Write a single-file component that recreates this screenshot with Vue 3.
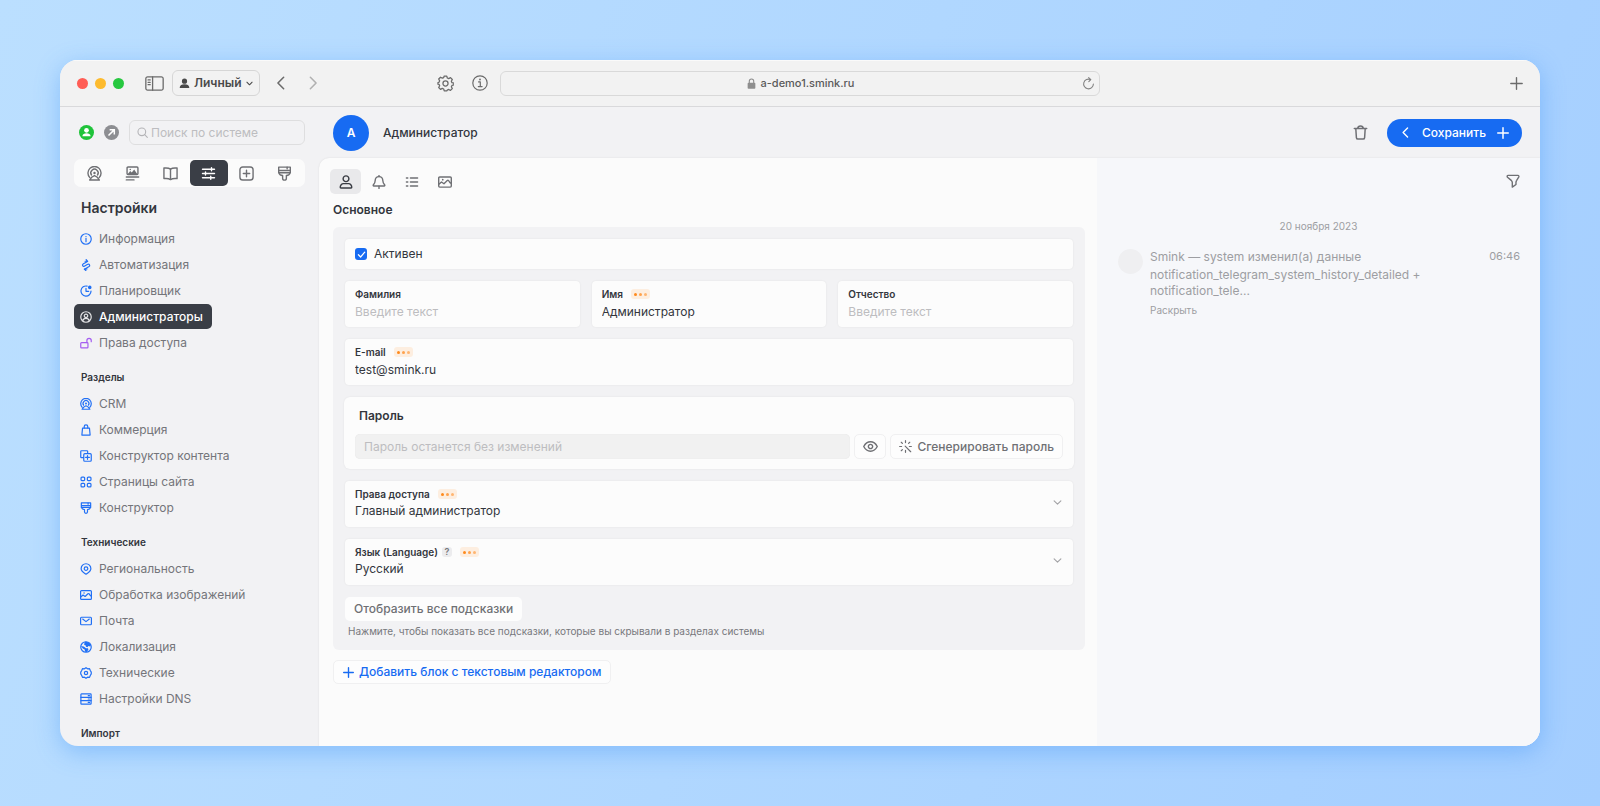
<script setup>
import { h, ref } from 'vue'

const dot = (cx, cy, r) =>
  `M${cx - r} ${cy}a${r} ${r} 0 1 0 ${2 * r} 0a${r} ${r} 0 1 0 ${-2 * r} 0z`

const glyphs = {
  info: { s: [dot(8, 8, 7), 'M8 7.2v4.4'], f: [dot(8, 4.8, 0.9)] },
  infoSerif: { s: [dot(8, 8, 7.2), 'M6.6 6.9h1.7v4.6M6.3 11.6h3.8'], f: [dot(8, 4.5, 0.9)] },
  bolt: { s: ['M10 3.200L4 6.800a1.700 1.700 0 0 0 1.700 2.900l4.600-2.600a1.700 1.700 0 0 1 1.800 2.900L6 13.600', 'M6.800 3l3.400.1L8.200 .8M9.200 13.200l-3.400.3 2 1.900'], f: [] },
  plan: { s: ['M14.700 8A6.700 6.700 0 1 1 9.500 1.500', 'M8 4.400V8.400h3.600'], f: [dot(13, 3.2, 2.4)] },
  admin: { s: [dot(8, 8, 7), dot(8, 6.4, 2.3), 'M3.600 13c.5-2.200 2.200-3.200 4.400-3.200s3.900 1 4.400 3.200'], f: [] },
  unlock: { s: ['M2 7.600h7.600a1 1 0 0 1 1 1v5a1 1 0 0 1-1 1H2a1 1 0 0 1-1-1v-5a1 1 0 0 1 1-1z', 'M9.200 7.400V4.600a2.900 2.900 0 0 1 5.800 0v1.600'], f: [] },
  crm: { s: ['M3 12.400A7 7 0 1 1 13 12.400', 'M4.800 9.600A3.900 3.900 0 1 1 11.200 9.600', 'M2.800 15c1-1.900 2.600-3.700 5.200-4.700 2.600 1 4.200 2.800 5.200 4.700z'], f: [dot(8, 7.4, 1.3)] },
  bag: { s: ['M3.400 5.400h9.200l.9 9.300h-11z', 'M5.600 5.200V3.600a2.400 2.400 0 0 1 4.800 0v1.600'], f: [] },
  copy: { s: ['M4.800 10.200H2a1 1 0 0 1-1-1V2a1 1 0 0 1 1-1h7.200a1 1 0 0 1 1 1v2.600', 'M6.400 4.900h7.200a1.400 1.400 0 0 1 1.400 1.400v7.300a1.400 1.400 0 0 1-1.400 1.400H6.400A1.400 1.400 0 0 1 5 13.600V6.300a1.400 1.400 0 0 1 1.400-1.400z', 'M10 7.400v5M7.500 9.900h5'], f: [] },
  grid: { s: ['M2.600 1.400h2.400a1.200 1.200 0 0 1 1.200 1.200v2.400a1.200 1.200 0 0 1-1.200 1.200H2.600a1.200 1.200 0 0 1-1.200-1.200V2.600a1.200 1.200 0 0 1 1.200-1.200z', 'M11 1.400h2.400a1.200 1.200 0 0 1 1.200 1.200v2.400a1.200 1.200 0 0 1-1.200 1.200H11a1.200 1.200 0 0 1-1.200-1.200V2.600A1.200 1.200 0 0 1 11 1.400z', 'M2.600 9.800h2.400a1.200 1.200 0 0 1 1.200 1.200v2.400a1.200 1.200 0 0 1-1.200 1.200H2.600a1.200 1.200 0 0 1-1.200-1.200V11a1.200 1.200 0 0 1 1.200-1.200z', 'M11 9.800h2.400a1.200 1.200 0 0 1 1.200 1.200v2.400a1.200 1.200 0 0 1-1.200 1.200H11a1.200 1.200 0 0 1-1.200-1.200V11A1.200 1.200 0 0 1 11 9.800z'], f: [] },
  brush: { s: ['M1.800 1.200h12.400v6H1.800z', 'M2 4.800h12M10.800 1.400v1.600', 'M2.200 7.400c.2 1.700 1.200 2.600 3.800 2.800v2.900a2 2 0 0 0 4 0v-2.900c2.600-.2 3.600-1.100 3.800-2.800'], f: [] },
  pin: { s: ['M8 1a6.500 6.500 0 0 1 6.500 6.500c0 3.300-3 5-6.500 7.500-3.500-2.500-6.500-4.200-6.500-7.500A6.500 6.500 0 0 1 8 1z', dot(8, 7.500, 2.400)], f: [] },
  image: { s: ['M2 2.200h12a1.200 1.200 0 0 1 1.200 1.200v9.200a1.200 1.200 0 0 1-1.200 1.200H2a1.200 1.200 0 0 1-1.200-1.200V3.400A1.200 1.200 0 0 1 2 2.200z', 'M1 10.600l3-2.600 2.800 2L10.600 6.400c1-.9 1.900.2 2.400 1.400.4 1 1.200 1.400 2 1.600'], f: [dot(5.4, 5.4, 1)] },
  mail: { s: ['M2 3h12a1.200 1.200 0 0 1 1.200 1.200v7.600a1.200 1.200 0 0 1-1.200 1.200H2a1.200 1.200 0 0 1-1.200-1.200V4.200A1.200 1.200 0 0 1 2 3z', 'M3.600 5.400L8 8.800l4.400-3.400'], f: [] },
  globe: { s: [dot(8, 8, 7)], f: ['M6 1.400c3-.9 6.500.4 8.400 4.200l-.8 1.600-2.600-.4-1 1.500-2-.6-.6-2-1.800-.5z', 'M1.200 6.800l3.800.6 3 2.200 2.600.2.600 1.600-2 3.200-2.400-.3-.6-3-2.400-1.200z'] },
  hexgear: { s: ['M8 .9l2.100 1.500 2.600-.2 1 2.500 1.300 2.100v2.400l-1.300 2.100-1 2.500-2.600-.2L8 15.100l-2.100-1.500-2.600.2-1-2.500L1 9.200V6.800l1.300-2.100 1-2.500 2.600.2z', dot(8, 8, 2.200)], f: [] },
  server: { s: ['M2 1.200h12a.8.8 0 0 1 .8.800v12a.8.8 0 0 1-.8.800H2a.8.8 0 0 1-.8-.8V2a.8.8 0 0 1 .8-.8z', 'M1.200 5.700h13.600M1.200 10.200h13.600M11 3.500h1.600M11 8h1.600M11 12.500h1.600'], f: [] },
  news: { s: ['M3.200 1h9.600a1 1 0 0 1 1 1v6a1 1 0 0 1-1 1H3.200a1 1 0 0 1-1-1V2a1 1 0 0 1 1-1z', 'M1.400 11.800h13.200M1.400 14.800h8.200'], f: ['M3 8.600l2.600-3.200 1.600 1.400 2.600-3 3.200 4.800z', dot(5.600, 3.600, 0.8)] },
  book: { s: ['M8 3.300C6.400 2.100 3.800 1.900 1 2.200v11.200c2.800-.3 5.400-.1 7 1.100 1.600-1.200 4.200-1.400 7-1.100V2.200C12.200 1.900 9.600 2.100 8 3.300z', 'M8 3.300v11'], f: [] },
  sliders: { s: ['M1.600 3.400h12.800M1.600 8h12.800M1.600 12.600h12.800', 'M11.200 1.800v3.200M4.800 6.400v3.200M10.400 11v3.200'], f: [] },
  plusbox: { s: ['M4 1h8a3 3 0 0 1 3 3v8a3 3 0 0 1-3 3H4a3 3 0 0 1-3-3V4a3 3 0 0 1 3-3z', 'M8 4.600v6.800M4.600 8h6.800'], f: [] },
  user: { s: [dot(8, 4.300, 3.300), 'M5 9.800h6c1.900 0 3.600 2.300 3.600 4.300 0 .5-.3.700-.8.700H2.200c-.5 0-.8-.2-.8-.7 0-2 1.700-4.300 3.600-4.300z'], f: [] },
  bell: { s: ['M8 1.800c2.900 0 4.300 2 4.400 4.700.1 2.500.8 3.300 2 4.700.5.600.3 1.400-.5 1.400H2.100c-.8 0-1-.8-.5-1.400 1.200-1.400 1.900-2.200 2-4.700C3.700 3.800 5.100 1.800 8 1.800z', 'M8 .6v1.200M8 12.800v2.600'], f: [] },
  list: { s: ['M6.200 3.400h8.200M6.200 8h8.200M6.200 12.600h8.200M1.600 3.400h1.600M1.600 8h1.600M1.600 12.600h1.600'], f: [] },
  search: { s: [dot(7, 7, 5.600), 'M11.200 11.200L15 15'], f: [] },
  trash: { s: ['M1.400 3.800h13.200M5 3.600C5.200 2 6 1 8 1s2.800 1 3 2.600', 'M3 4l.6 9.400c.1 1 .7 1.600 1.600 1.600h5.600c.9 0 1.500-.6 1.600-1.600L13 4'], f: [] },
  filter: { s: ['M2.400 1.600h11.200c1 0 1.400 1 .9 1.900l-2.300 3.700c-.6.900-.8 1.600-.8 2.600v2.200l-4.200 3v-5.200c0-1-.5-1.700-1.200-2.500L1.700 3.700C1 2.700 1.300 1.600 2.400 1.600z'], f: [] },
  eye: { s: ['M.8 8C2.600 4.600 5 3 8 3s5.400 1.600 7.200 5C13.400 11.400 11 13 8 13S2.600 11.400.8 8z', dot(8, 8, 2.300)], f: [] },
  magic: { s: ['M7.600 7.600l6.800 6.800M8 .8v2.400M8 12.800v2.400M.8 8h2.400M12.800 8h2.400M2.800 2.800l1.400 1.400M13.200 2.800l-1.400 1.400M2.800 13.200l1.400-1.400'], f: [] },
  left: { s: ['M11 1.500L4.500 8l6.500 6.500'], f: [] },
  right: { s: ['M5 1.500L11.500 8 5 14.500'], f: [] },
  down: { s: ['M2 5l6 6 6-6'], f: [] },
  plus: { s: ['M8 1v14M1 8h14'], f: [] },
  reload: { s: ['M10.600 3.200A6 6 0 1 0 14 8.600', 'M8.200.8l2.600 2.400-2.400 2.600'], f: [] },
  gear: { s: ['M6.800 1h2.400l.5 1.800 1.300.6 1.700-.9 1.700 1.700-.9 1.700.6 1.300 1.800.5v1.600l-1.800.5-.6 1.300.9 1.700-1.700 1.700-1.700-.9-1.300.6L9.200 15H6.800l-.5-1.800-1.300-.6-1.700.9-1.700-1.700.9-1.700-.6-1.300L.9 8.600V7.200l1-.4.6-1.300-.9-1.700 1.700-1.700 1.700.9 1.300-.6z', dot(8, 8, 2.400)], f: [] },
  person: { s: [], f: [dot(8, 4.600, 3.800), 'M1 14.400c0-3.600 3-5.200 7-5.200s7 1.600 7 5.200z'] },
  lock: { s: ['M4.800 7.200V4.600a3.200 3.200 0 0 1 6.400 0v2.600'], f: ['M3.600 6.800h8.800a1.200 1.200 0 0 1 1.200 1.200v6.400a1.200 1.200 0 0 1-1.200 1.200H3.600a1.200 1.200 0 0 1-1.200-1.200V8a1.200 1.200 0 0 1 1.200-1.200z'] },
  check: { s: ['M3.500 8.400l3.200 3.200 6-7'], f: [] },
  panel: { s: ['M2.200 2.400h11.600a1.500 1.500 0 0 1 1.500 1.500v8.200a1.500 1.500 0 0 1-1.500 1.500H2.200a1.500 1.500 0 0 1-1.500-1.500V3.900a1.500 1.500 0 0 1 1.500-1.500z', 'M6.400 2.400v11.200M2.600 5h1.800M2.600 7h1.800M2.600 9h1.800'], f: [] },
}

const Icon = (props) =>
  h(
    'svg',
    {
      width: props.size,
      height: props.size,
      viewBox: '0 0 16 16',
      fill: 'none',
      stroke: 'currentColor',
      'stroke-width': props.w,
      'stroke-linecap': 'round',
      'stroke-linejoin': 'round',
      'aria-hidden': 'true',
    },
    [
      ...glyphs[props.name].s.map((d) => h('path', { d })),
      ...glyphs[props.name].f.map((d) => h('path', { d, fill: 'currentColor', stroke: 'none' })),
    ],
  )
Icon.props = { name: String, size: { default: 15 }, w: { default: 1.3 } }

const sections = [
  { icon: 'crm', label: 'CRM' },
  { icon: 'news', label: 'Контент' },
  { icon: 'book', label: 'Справочники' },
  { icon: 'sliders', label: 'Настройки', active: true },
  { icon: 'plusbox', label: 'Добавить' },
  { icon: 'brush', label: 'Конструктор' },
]

const groups = [
  {
    title: 'Настройки',
    main: true,
    items: [
      { icon: 'info', text: 'Информация' },
      { icon: 'bolt', text: 'Автоматизация' },
      { icon: 'plan', text: 'Планировщик' },
      { icon: 'admin', text: 'Администраторы', active: true },
      { icon: 'unlock', text: 'Права доступа', violet: true },
    ],
  },
  {
    title: 'Разделы',
    items: [
      { icon: 'crm', text: 'CRM' },
      { icon: 'bag', text: 'Коммерция' },
      { icon: 'copy', text: 'Конструктор контента' },
      { icon: 'grid', text: 'Страницы сайта' },
      { icon: 'brush', text: 'Конструктор' },
    ],
  },
  {
    title: 'Технические',
    items: [
      { icon: 'pin', text: 'Региональность' },
      { icon: 'image', text: 'Обработка изображений' },
      { icon: 'mail', text: 'Почта' },
      { icon: 'globe', text: 'Локализация' },
      { icon: 'hexgear', text: 'Технические' },
      { icon: 'server', text: 'Настройки DNS' },
    ],
  },
  { title: 'Импорт', items: [] },
]

const tabs = [
  { icon: 'user', label: 'Основное', active: true },
  { icon: 'bell', label: 'Уведомления' },
  { icon: 'list', label: 'Список' },
  { icon: 'image', label: 'Изображения' },
]

const active = ref(true)
const names = ref([
  { id: 'surname', label: 'Фамилия', value: '' },
  { id: 'name', label: 'Имя', value: 'Администратор', required: true },
  { id: 'patronymic', label: 'Отчество', value: '' },
])
const email = ref('test@smink.ru')
const password = ref('')
</script>

<template>
  <div class="desktop">
    <div class="window">
      <header class="browser">
        <div class="browser-left">
          <div class="lights"><i class="red"></i><i class="yellow"></i><i class="green"></i></div>
          <button class="plain side-toggle" aria-label="Боковая панель"><Icon name="panel" :size="19" :w="1.1" /></button>
          <button class="profile"><Icon name="person" :size="11" /><span>Личный</span><Icon name="down" :size="7" :w="2.4" /></button>
          <button class="plain back" aria-label="Назад"><Icon name="left" :size="14" :w="1.8" /></button>
          <button class="plain forward" aria-label="Вперёд"><Icon name="right" :size="14" :w="1.8" /></button>
          <button class="plain gear" aria-label="Параметры"><Icon name="gear" :size="17" :w="1.2" /></button>
          <button class="plain about" aria-label="О сайте"><Icon name="infoSerif" :size="16" :w="1.2" /></button>
        </div>
        <div class="address">
          <Icon class="lock" name="lock" :size="11" :w="1.6" />
          <span>a-demo1.smink.ru</span>
          <button class="plain reload" aria-label="Обновить"><Icon name="reload" :size="13" /></button>
        </div>
        <div class="browser-right">
          <button class="plain" aria-label="Новая вкладка"><Icon name="plus" :size="13" :w="1.7" /></button>
        </div>
      </header>

      <div class="app">
        <nav class="sidebar">
          <div class="finder">
            <button class="round online" aria-label="Профиль">
              <svg width="15" height="15" viewBox="0 0 16 16"><circle cx="8" cy="8" r="8" fill="#1fc33a" /><circle cx="8" cy="5.700" r="2.500" fill="#fff" /><path d="M3.600 12c.3-2.300 2-3.200 4.400-3.200s4.100.9 4.400 3.200z" fill="#fff" /></svg>
            </button>
            <button class="round outside" aria-label="Открыть сайт">
              <svg width="15" height="15" viewBox="0 0 16 16"><circle cx="8" cy="8" r="8" fill="#8d8e92" /><path d="M4.800 11.200l6-6M6 5h5v5" fill="none" stroke="#fff" stroke-width="1.600" /></svg>
            </button>
            <label class="search"><Icon name="search" :size="11" :w="1.6" /><input type="search" placeholder="Поиск по системе" aria-label="Поиск по системе" /></label>
          </div>

          <div class="sections">
            <button v-for="s in sections" :key="s.icon" :class="{ on: s.active }" :aria-label="s.label">
              <Icon :name="s.icon" :size="15" :w="1.5" />
            </button>
          </div>

          <section v-for="g in groups" :key="g.title" class="group">
            <h2 :class="{ main: g.main }">{{ g.title }}</h2>
            <a v-for="i in g.items" :key="i.text" href="#" :class="{ on: i.active, violet: i.violet }">
              <Icon :name="i.icon" :size="12" :w="1.6" /><span>{{ i.text }}</span>
            </a>
          </section>
        </nav>

        <main class="page">
          <header class="page-head">
            <div class="avatar">А</div>
            <h1>Администратор</h1>
            <button class="plain trash" aria-label="Удалить"><Icon name="trash" :size="15" :w="1.6" /></button>
            <div class="save">
              <button aria-label="Сохранить и вернуться"><Icon name="left" :size="11" :w="2" /></button>
              <button class="save-main">Сохранить</button>
              <button aria-label="Сохранить и создать"><Icon name="plus" :size="12" :w="2" /></button>
            </div>
          </header>

          <div class="body">
            <form class="content" @submit.prevent>
              <div class="tabs">
                <button v-for="t in tabs" :key="t.icon" type="button" :class="{ on: t.active }" :aria-label="t.label">
                  <Icon :name="t.icon" :size="14" :w="1.6" />
                </button>
              </div>
              <h2 class="block-title">Основное</h2>

              <div class="panel">
                <label class="card check">
                  <input v-model="active" type="checkbox" />
                  <span class="box"><Icon name="check" :size="11" :w="1.8" /></span>
                  <span>Активен</span>
                </label>

                <div class="names">
                  <div v-for="n in names" :key="n.id" class="card field">
                    <div class="caption">
                      <label :for="n.id">{{ n.label }}</label>
                      <span v-if="n.required" class="badge"><i></i><i></i><i></i></span>
                    </div>
                    <input :id="n.id" v-model="n.value" type="text" placeholder="Введите текст" />
                  </div>
                </div>

                <div class="card field">
                  <div class="caption"><label for="email">E-mail</label><span class="badge"><i></i><i></i><i></i></span></div>
                  <input id="email" v-model="email" type="email" />
                </div>

                <div class="card password">
                  <label for="password">Пароль</label>
                  <div class="password-row">
                    <input id="password" v-model="password" type="password" placeholder="Пароль останется без изменений" />
                    <button type="button" class="btn eye" aria-label="Показать пароль"><Icon name="eye" :size="15" :w="1.500" /></button>
                    <button type="button" class="btn"><Icon name="magic" :size="13" :w="1.500" />Сгенерировать пароль</button>
                  </div>
                </div>

                <div class="card field select">
                  <div class="caption"><label for="role">Права доступа</label><span class="badge"><i></i><i></i><i></i></span></div>
                  <select id="role"><option>Главный администратор</option></select>
                  <Icon class="arrow" name="down" :size="9" :w="2" />
                </div>

                <div class="card field select">
                  <div class="caption">
                    <label for="lang">Язык (Language)</label><span class="help">?</span><span class="badge"><i></i><i></i><i></i></span>
                  </div>
                  <select id="lang"><option>Русский</option></select>
                  <Icon class="arrow" name="down" :size="9" :w="2" />
                </div>

                <div class="hints">
                  <button type="button" class="btn hints-btn">Отобразить все подсказки</button>
                  <p>Нажмите, чтобы показать все подсказки, которые вы скрывали в разделах системы</p>
                </div>
              </div>

              <button type="button" class="btn add"><Icon name="plus" :size="11" :w="2" />Добавить блок с текстовым редактором</button>
            </form>

            <aside class="history">
              <button class="plain filter" aria-label="Фильтр"><Icon name="filter" :size="14" :w="1.6" /></button>
              <div class="date">20 ноября 2023</div>
              <article class="event">
                <div class="face"></div>
                <div class="event-text">
                  <p>Smink — system изменил(а) данные</p>
                  <p class="detail">notification_telegram_system_history_detailed + notification_tele...</p>
                  <button class="plain more">Раскрыть</button>
                </div>
                <time>06:46</time>
              </article>
            </aside>
          </div>
        </main>
      </div>
    </div>
  </div>
</template>

<style>
body {
  margin: 0;
}
</style>

<style scoped>
.desktop,
.desktop * {
  box-sizing: border-box;
}
.desktop {
  height: 100vh;
  padding: 60px;
  background: linear-gradient(110deg, #bbdfff 0%, #b0d7ff 50%, #a4ceff 100%);
  font-family: Inter, "Noto Sans", sans-serif;
  font-size: 12px;
  line-height: 16px;
  color: #33363d;
}
button,
input,
select {
  font: inherit;
  color: inherit;
  margin: 0;
  padding: 0;
  border: 0;
  background: none;
  outline: none;
}
button {
  display: flex;
  align-items: center;
  justify-content: center;
  cursor: pointer;
}
svg {
  display: block;
  flex: none;
}
h1,
h2,
p {
  margin: 0;
}
.window {
  height: 100%;
  display: flex;
  flex-direction: column;
  overflow: hidden;
  border-radius: 18px;
  background: #f2f2f4;
  box-shadow: 0 6px 24px rgba(60, 145, 245, 0.4);
}

/* browser chrome */
.browser {
  flex: none;
  height: 47px;
  display: grid;
  grid-template-columns: 1fr 600px 1fr;
  align-items: center;
  background: #f2f2f2;
  border-bottom: 1px solid #d9d9db;
  box-shadow: inset 0 1px 0 #fafafa;
}
.browser-left {
  display: flex;
  align-items: center;
  padding: 0 12px 0 17px;
  color: #6b6b6b;
}
.lights {
  display: flex;
  gap: 7px;
}
.lights i {
  width: 11px;
  height: 11px;
  border-radius: 50%;
}
.red {
  background: #ff5d55;
}
.yellow {
  background: #fdbb2e;
}
.green {
  background: #27c840;
}
.side-toggle {
  margin-left: 21px;
}
.profile {
  height: 26px;
  margin-left: 8px;
  padding: 0 6px;
  gap: 4px;
  border: 1px solid #d6d6d6;
  border-radius: 6px;
  font-weight: 600;
  color: #4a4a4a;
}
.back {
  margin-left: 14px;
}
.forward {
  margin-left: 18px;
  color: #b0b0b0;
}
.gear {
  margin-left: auto;
}
.about {
  margin-left: 18px;
}
.address {
  position: relative;
  height: 25px;
  display: flex;
  align-items: center;
  justify-content: center;
  gap: 4px;
  border: 1px solid #d9d9d9;
  border-radius: 6px;
  font-size: 11px;
  font-weight: 500;
  color: #5a5a5a;
}
.lock {
  color: #8e8e8e;
}
.reload {
  position: absolute;
  right: 4px;
  color: #808080;
}
.browser-right {
  display: flex;
  justify-content: flex-end;
  padding-right: 17px;
  color: #6b6b6b;
}

/* sidebar */
.app {
  flex: 1;
  min-height: 0;
  display: flex;
}
.sidebar {
  flex: none;
  width: 259px;
  padding: 13px 14px 0;
  overflow: hidden;
}
.finder {
  display: flex;
  align-items: center;
  padding-left: 5px;
  gap: 10px;
}
.search {
  flex: 1;
  min-width: 0;
  height: 25px;
  display: flex;
  align-items: center;
  gap: 3px;
  padding: 0 7px;
  border: 1px solid #dededf;
  border-radius: 6px;
  color: #b4b4b7;
}
.search input {
  flex: 1;
  min-width: 0;
}
input::placeholder {
  color: #bdbdc0;
  opacity: 1;
}
.sections {
  display: flex;
  margin: 14px 0 9px;
  padding: 1px;
  border-radius: 7px;
  background: #fbfbfb;
}
.sections button {
  flex: 1;
  height: 26px;
  border-radius: 5px;
  color: #6f7074;
}
.sections .on {
  background: #3a3e46;
  color: #fff;
}
.group {
  display: flex;
  flex-direction: column;
  align-items: flex-start;
  gap: 1px;
  margin-bottom: 14px;
}
.group h2 {
  padding: 0 7px;
  margin-bottom: 5px;
  font-size: 10px;
  font-weight: 600;
}
.group h2.main {
  margin-bottom: 5px;
  font-size: 14px;
  line-height: 24px;
}
.group a {
  height: 25px;
  display: flex;
  align-items: center;
  gap: 7px;
  padding: 0 9px 0 6px;
  border-radius: 5px;
  color: #74757a;
  text-decoration: none;
}
.group a svg {
  color: #2170f5;
}
.group a.violet svg {
  color: #a55ef0;
}
.group a.on {
  background: #3a3e46;
  color: #fff;
  font-weight: 500;
}
.group a.on svg {
  color: #e4e4e6;
}

/* page */
.page {
  flex: 1;
  min-width: 0;
  display: flex;
  flex-direction: column;
}
.page-head {
  flex: none;
  height: 51px;
  display: flex;
  align-items: center;
  padding: 0 18px 0 14px;
}
.avatar {
  width: 36px;
  height: 36px;
  border-radius: 50%;
  display: grid;
  place-items: center;
  background: #176bf2;
  color: #fff;
  font-weight: 600;
}
h1 {
  margin-left: 14px;
  font-size: 12px;
  font-weight: 500;
}
.trash {
  margin-left: auto;
  margin-right: 19px;
  color: #6f7074;
}
.save {
  height: 28px;
  display: flex;
  padding: 0 13px;
  gap: 11px;
  border-radius: 14px;
  background: #176bf2;
  color: #fff;
}
.save-main {
  font-weight: 500;
}
.body {
  flex: 1;
  min-height: 0;
  display: flex;
  overflow: hidden;
  border-top-left-radius: 10px;
  background: #fbfbfb;
  box-shadow: 0 0 2px rgba(0, 0, 0, 0.1);
}
.content {
  flex: 1;
  min-width: 0;
  padding: 11px 12px 0 14px;
}
.tabs {
  display: flex;
  gap: 2px;
  margin-left: -3px;
}
.tabs button {
  width: 31px;
  height: 25px;
  border-radius: 5px;
  color: #6f7074;
}
.tabs .on {
  background: #e9e9eb;
  color: #3a3d44;
}
.block-title {
  margin: 8px 0 9px;
  font-size: 12px;
  font-weight: 600;
}
.panel {
  display: flex;
  flex-direction: column;
  gap: 12px;
  padding: 12px;
  border-radius: 6px;
  background: #f2f2f4;
}
.card {
  border-radius: 4px;
  background: #fcfcfc;
  box-shadow: 0 0 2px rgba(0, 0, 0, 0.08);
}
.check {
  position: relative;
  height: 30px;
  display: flex;
  align-items: center;
  gap: 7px;
  padding: 0 10px;
}
.check input {
  position: absolute;
  opacity: 0;
}
.box {
  width: 12px;
  height: 12px;
  display: grid;
  place-items: center;
  border-radius: 3px;
  background: #176bf2;
  color: #fff;
}
.names {
  display: grid;
  grid-template-columns: repeat(3, 1fr);
  gap: 12px;
}
.field {
  position: relative;
  height: 46px;
  padding: 5px 10px;
}
.caption {
  display: flex;
  align-items: center;
  height: 16px;
  font-size: 10px;
  font-weight: 600;
}
.field input,
.field select {
  display: block;
  width: 100%;
  height: 18px;
  appearance: none;
}
.badge {
  width: 19px;
  height: 10px;
  display: flex;
  align-items: center;
  justify-content: center;
  gap: 2px;
  margin-left: 8px;
  border-radius: 3px;
  background: #fdeee0;
}
.badge i {
  width: 3px;
  height: 3px;
  border-radius: 50%;
  background: #ff8a1c;
}
.badge i + i {
  background: #ffa24c;
}
.badge i + i + i {
  background: #ffb570;
}
.help {
  width: 10px;
  height: 10px;
  margin-left: 4px;
  border-radius: 3px;
  background: #ececee;
  color: #77787c;
  font-size: 9px;
  line-height: 10px;
  text-align: center;
}
.arrow {
  position: absolute;
  right: 11px;
  top: 17px;
  color: #a3a3a6;
}
.password {
  margin: 0 -1px;
  padding: 11px 11px 10px;
  border-radius: 6px;
}
.password > label {
  display: block;
  margin: 0 0 10px 4px;
  font-weight: 600;
}
.password-row {
  display: flex;
  gap: 4px;
}
.password-row input {
  flex: 1;
  min-width: 0;
  height: 25px;
  padding: 0 9px;
  border-radius: 5px;
  background: #f1f1f1;
  box-shadow: inset 0 0 1px rgba(0, 0, 0, 0.1);
}
.btn {
  height: 25px;
  gap: 5px;
  padding: 0 8px;
  border: 1px solid #f0f0f1;
  border-radius: 5px;
  background: #fdfdfd;
  color: #6f7074;
  font-weight: 500;
}
.eye {
  width: 32px;
  padding: 0;
}
.hints-btn {
  height: 24px;
  padding: 0 9px;
  border: 0;
}
.hints p {
  margin: 3px 0 0 3px;
  font-size: 10px;
  line-height: 14px;
  color: #77787c;
}
.add {
  height: 24px;
  margin-top: 10px;
  padding: 0 9px;
  color: #176bf2;
}

/* history */
.history {
  flex: none;
  width: 443px;
  display: flex;
  flex-direction: column;
  padding: 16px 20px 0;
  background: #f6f7fa;
  color: #9d9ea2;
}
.filter {
  align-self: flex-end;
  color: #6f7074;
}
.date {
  margin: 30px 0 15px;
  text-align: center;
  font-size: 10px;
}
.event {
  display: flex;
  align-items: flex-start;
}
.face {
  flex: none;
  width: 25px;
  height: 25px;
  margin: 0 7px 0 1px;
  border-radius: 50%;
  background: #efeff1;
}
.event-text {
  flex: 0 1 304px;
}
.detail {
  margin-top: 2px;
}
.more {
  margin-top: 3px;
  font-size: 10px;
}
time {
  margin-left: auto;
  font-size: 11px;
  line-height: 14px;
}
</style>
